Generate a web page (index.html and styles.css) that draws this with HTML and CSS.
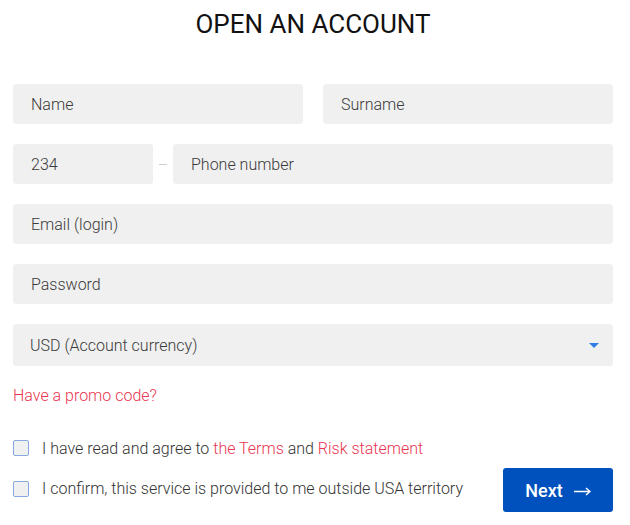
FILE: index.html
```html
<!DOCTYPE html>
<html>
<head>
<meta charset="utf-8">
<link rel="stylesheet" href="styles.css">
</head>
<body>
<div class="page">
  <h1 class="title">OPEN AN ACCOUNT</h1>
  <div class="form">
    <div class="row two">
      <div class="field">Name</div>
      <div class="field">Surname</div>
    </div>
    <div class="row phone">
      <div class="field code">234</div>
      <span class="dash"></span>
      <div class="field grow">Phone number</div>
    </div>
    <div class="row"><div class="field grow">Email (login)</div></div>
    <div class="row"><div class="field grow">Password</div></div>
    <div class="row"><div class="field select grow"><span>USD (Account currency)</span><span class="caret"></span></div></div>
  </div>
  <div class="promo">Have a promo code?</div>
  <div class="bottom">
    <label class="check r1"><span class="box"></span><span>I have read and agree to <span class="link">the Terms</span> and <span class="link">Risk statement</span></span></label>
    <label class="check r2"><span class="box"></span><span>I confirm, this service is provided to me outside USA territory</span></label>
    <button class="next">Next <svg class="arrow" width="17" height="9" viewBox="0 0 17 9"><path d="M0 4.5H16M12 1L16 4.5L12 8" fill="none" stroke="#ffffff" stroke-width="1.5"/></svg></button>
  </div>
</div>
</body>
</html>
```
FILE: styles.css
```css
html, body {
  margin: 0;
  padding: 0;
  background: #ffffff;
}
body {
  font-family: Roboto, "Liberation Sans", sans-serif;
  color: #333333;
}
.page {
  width: 600px;
  padding: 0 17px 0 13px;
}
.title {
  margin: 9px 0 45px;
  height: 30px;
  line-height: 30px;
  font-size: 26px;
  font-weight: 400;
  text-align: center;
  color: #111111;
}
.form {
  display: flex;
  flex-direction: column;
  gap: 20px;
}
.row {
  display: flex;
  align-items: center;
}
.row.two {
  gap: 20px;
}
.row.two .field {
  flex: 1;
}
.row.phone {
  gap: 6px;
}
.field {
  height: 40px;
  background: #f0f0f0;
  border-radius: 3px;
  padding: 0 18px;
  box-sizing: border-box;
  display: flex;
  align-items: center;
  font-size: 16px;
  font-weight: 300;
  color: #3a3a3a;
}
.grow {
  flex: 1;
}
.code {
  width: 140px;
}
.dash {
  width: 8px;
  height: 1px;
  background: #d0d0d0;
}
.select {
  height: 42px;
  padding: 0 14px 0 17px;
  justify-content: space-between;
}
.caret {
  width: 0;
  height: 0;
  border-left: 5px solid transparent;
  border-right: 5px solid transparent;
  border-top: 5px solid #2f7ee3;
  margin-top: 1px;
}
.promo {
  margin-top: 20px;
  line-height: 20px;
  font-size: 16px;
  font-weight: 300;
  color: #e8354f;
}
.bottom {
  margin-top: 30px;
  display: grid;
  grid-template-columns: 1fr auto;
  row-gap: 8px;
  align-items: center;
}
.check {
  display: flex;
  align-items: center;
  gap: 13px;
  font-size: 16px;
  font-weight: 300;
  color: #333333;
  height: 24px;
}
.r1 {
  grid-column: 1 / 3;
  grid-row: 1;
}
.r2 {
  grid-column: 1;
  grid-row: 2;
  margin-top: -3px;
}
.box {
  width: 16px;
  height: 16px;
  box-sizing: border-box;
  border: 1px solid #86a9e0;
  border-radius: 2px;
  background: #f0f0f0;
  flex: none;
}
.link {
  color: #e8354f;
}
.next {
  grid-column: 2;
  grid-row: 2;
  width: 110px;
  height: 44px;
  border: none;
  border-radius: 3px;
  background: #0051bd;
  color: #ffffff;
  font-family: Roboto, "Liberation Sans", sans-serif;
  font-size: 18px;
  font-weight: 500;
  padding: 0;
  display: flex;
  align-items: center;
  justify-content: center;
  gap: 11px;
}
.arrow {
  display: block;
  margin-top: 2px;
}
```
